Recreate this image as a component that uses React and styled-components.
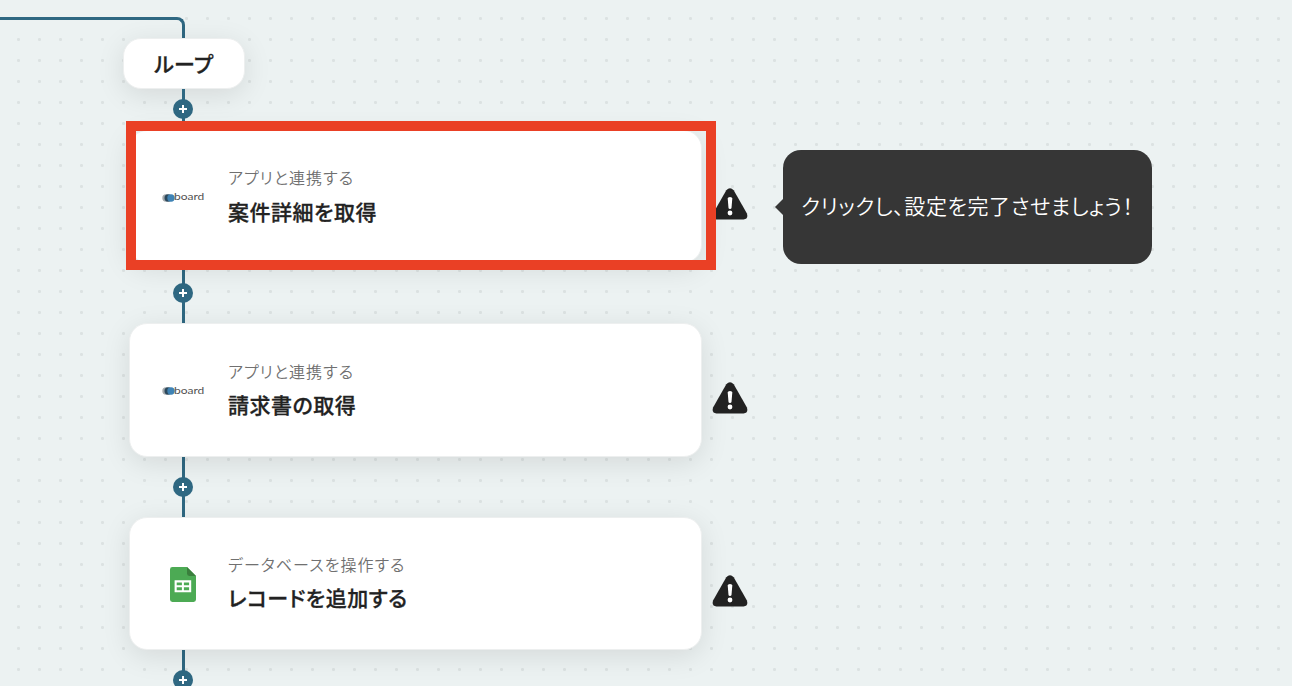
import React from "react";
import styled, { createGlobalStyle } from "styled-components";

const steps = [
  { icon: "board", label: "アプリと連携する", title: "案件詳細を取得", active: true, hint: "クリックし、設定を完了させましょう！" },
  { icon: "board", label: "アプリと連携する", title: "請求書の取得" },
  { icon: "sheets", label: "データベースを操作する", title: "レコードを追加する" },
];

const BoardLogo = () => (
  <LogoBox>
    <svg width="13" height="10" viewBox="0 0 13 10">
      <circle cx="4" cy="5" r="3.700" fill="#a3a8ab" />
      <circle cx="6.200" cy="5" r="3.700" fill="#2b485c" />
      <circle cx="9" cy="5" r="3.700" fill="#3f83b5" />
    </svg>
    <LogoText>board</LogoText>
  </LogoBox>
);

const SheetsLogo = () => (
  <SheetsIcon width="26" height="35" viewBox="0 0 26 35">
    <path d="M2.4 0H17l9 9v23.6A2.4 2.4 0 0 1 23.6 35H2.4A2.4 2.4 0 0 1 0 32.6V2.4A2.4 2.4 0 0 1 2.4 0z" fill="#4caa54" />
    <path d="M17 0l9 9h-6.6A2.4 2.4 0 0 1 17 6.600z" fill="#3a7f3d" />
    <path
      d="M4.600 13.300h16.600v12H4.600zM6.700 15.400v2.800h5.200v-2.800zM13.900 15.400v2.800h5.200v-2.800zM6.700 20.300v2.900h5.200v-2.900zM13.900 20.300v2.900h5.200v-2.900z"
      fill="#fff"
      fillRule="evenodd"
    />
  </SheetsIcon>
);

const WarningIcon = () => (
  <Warning width="36" height="32" viewBox="0 0 36 32">
    <path
      d="M14.300 2.200Q18 -1.600 21.700 2.200L34.800 25.300Q36.800 31 31.600 31.500H4.400Q-0.800 31 1.200 25.300z"
      fill="#222"
    />
    <path d="M15.700 10.600q0-1.500 2.300-1.500t2.300 1.500l-.8 9.300q-.2 1-1.500 1t-1.500-1z" fill="#fff" />
    <circle cx="18" cy="25" r="2.400" fill="#fff" />
  </Warning>
);

const AddButton = () => (
  <Link>
    <Add>
      <svg width="8" height="8" viewBox="0 0 8 8">
        <path d="M4 0v8M0 4h8" stroke="#fff" strokeWidth="2" />
      </svg>
    </Add>
  </Link>
);

const Step = ({ icon, label, title, active, hint }) => (
  <Row>
    <Card>
      <IconSlot>{icon === "board" ? <BoardLogo /> : <SheetsLogo />}</IconSlot>
      <Texts>
        <Label>{label}</Label>
        <Title>{title}</Title>
      </Texts>
    </Card>
    <WarningIcon />
    {active && <Frame />}
    {hint && (
      <Tooltip>
        <TooltipText>{hint}</TooltipText>
      </Tooltip>
    )}
  </Row>
);

const App = () => {
  return (
    <Canvas>
      <GlobalStyle />
      <Elbow />
      <Pill>ループ</Pill>
      <FirstLink>
        <AddButton />
      </FirstLink>
      {steps.map((step) => (
        <React.Fragment key={step.title}>
          <Step {...step} />
          <AddButton />
        </React.Fragment>
      ))}
    </Canvas>
  );
};

export default App;

const GlobalStyle = createGlobalStyle`
  * {
    box-sizing: border-box;
  }
  body {
    margin: 0;
    font-family: "Noto Sans CJK JP", sans-serif;
    color: #222;
  }
`;

const Canvas = styled.div`
  width: 1292px;
  height: 686px;
  overflow: hidden;
  display: flex;
  flex-direction: column;
  align-items: flex-start;
  background-color: #ecf2f2;
  background-image: radial-gradient(circle, #dce2e2 1.2px, transparent 1.9px);
  background-size: 21px 21px;
  background-position: 8px 8px;
`;

const Elbow = styled.div`
  flex: none;
  width: 185px;
  height: 22px;
  margin-top: 17px;
  border-top: 3px solid #2f6882;
  border-right: 3px solid #2f6882;
  border-top-right-radius: 8px;
`;

const Pill = styled.div`
  flex: none;
  width: 122px;
  height: 51px;
  margin: -1px 0 0 123px;
  padding-bottom: 2px;
  display: flex;
  justify-content: center;
  align-items: center;
  background: #fff;
  border: 1px solid #edefef;
  border-radius: 18px;
  box-shadow: 0 6px 28px rgba(0, 0, 0, 0.1);
  font-size: 21px;
  font-weight: 500;
  line-height: 30px;
  font-feature-settings: "palt";
  letter-spacing: 0.4px;
  -webkit-text-stroke: 0.3px #222;
`;

const Link = styled.div`
  flex: none;
  width: 20px;
  height: 60px;
  margin-left: 173px;
  display: flex;
  justify-content: center;
  align-items: center;
  background: linear-gradient(#2f6882, #2f6882) 9px 0 / 3px 100% no-repeat;
`;

const Add = styled.div`
  width: 20px;
  height: 20px;
  display: flex;
  justify-content: center;
  align-items: center;
  border-radius: 50%;
  background: #2f6882;
`;

const FirstLink = styled.div`
  flex: none;
  ${Link} {
    height: 41px;
  }
  ${Add} {
    margin-bottom: 1px;
  }
`;

const Row = styled.div`
  flex: none;
  position: relative;
  display: flex;
  align-items: center;
  margin-left: 129px;
`;

const Card = styled.div`
  width: 573px;
  height: 133.4px;
  padding: 0 33px 0 32px;
  display: flex;
  align-items: center;
  background: #fff;
  border: 1px solid #edefef;
  border-radius: 18px;
  box-shadow: 0 6px 28px rgba(0, 0, 0, 0.1);
`;

const IconSlot = styled.div`
  width: 42px;
  display: flex;
`;

const LogoBox = styled.div`
  display: flex;
  align-items: center;
  height: 12px;
  padding-top: 2px;
`;

const LogoText = styled.span`
  margin: -2px 0 0 -1px;
  font-family: Lato, sans-serif;
  font-size: 10px;
  line-height: 11px;
  letter-spacing: 0;
  color: #505050;
  transform: scaleX(1.2);
  transform-origin: left;
`;

const SheetsIcon = styled.svg`
  margin: 2px 0 0 7.500px;
`;

const Texts = styled.div`
  margin: -1.600px 0 0 24px;
  font-feature-settings: "palt";
  white-space: nowrap;
`;

const Label = styled.div`
  font-size: 16px;
  font-weight: 350;
  line-height: 24px;
  color: #707070;
  letter-spacing: 1.05px;
`;

const Title = styled.div`
  margin-top: 5.500px;
  font-size: 21px;
  font-weight: 500;
  line-height: 32px;
  letter-spacing: 0.5px;
  -webkit-text-stroke: 0.3px #222;
`;

const Warning = styled.svg`
  margin: 15px 0 0 10px;
`;

const Frame = styled.div`
  position: absolute;
  z-index: 1;
  left: -3px;
  top: -9px;
  width: 590px;
  height: 149px;
  border: 10px solid #ea4025;
`;

const Tooltip = styled.div`
  position: absolute;
  left: 654px;
  top: 20px;
  width: 369px;
  height: 114px;
  padding: 0 0 5px 18px;
  display: flex;
  align-items: center;
  background: #363636;
  border-radius: 18px;

  &::before {
    content: "";
    position: absolute;
    left: -8px;
    top: 49px;
    border: solid transparent;
    border-width: 8px 8px 8px 0;
    border-right-color: #363636;
  }
`;

const TooltipText = styled.span`
  color: #fff;
  font-size: 21px;
  font-weight: 350;
  line-height: 32px;
  font-feature-settings: "palt";
  letter-spacing: 0.6px;
  white-space: nowrap;
`;
